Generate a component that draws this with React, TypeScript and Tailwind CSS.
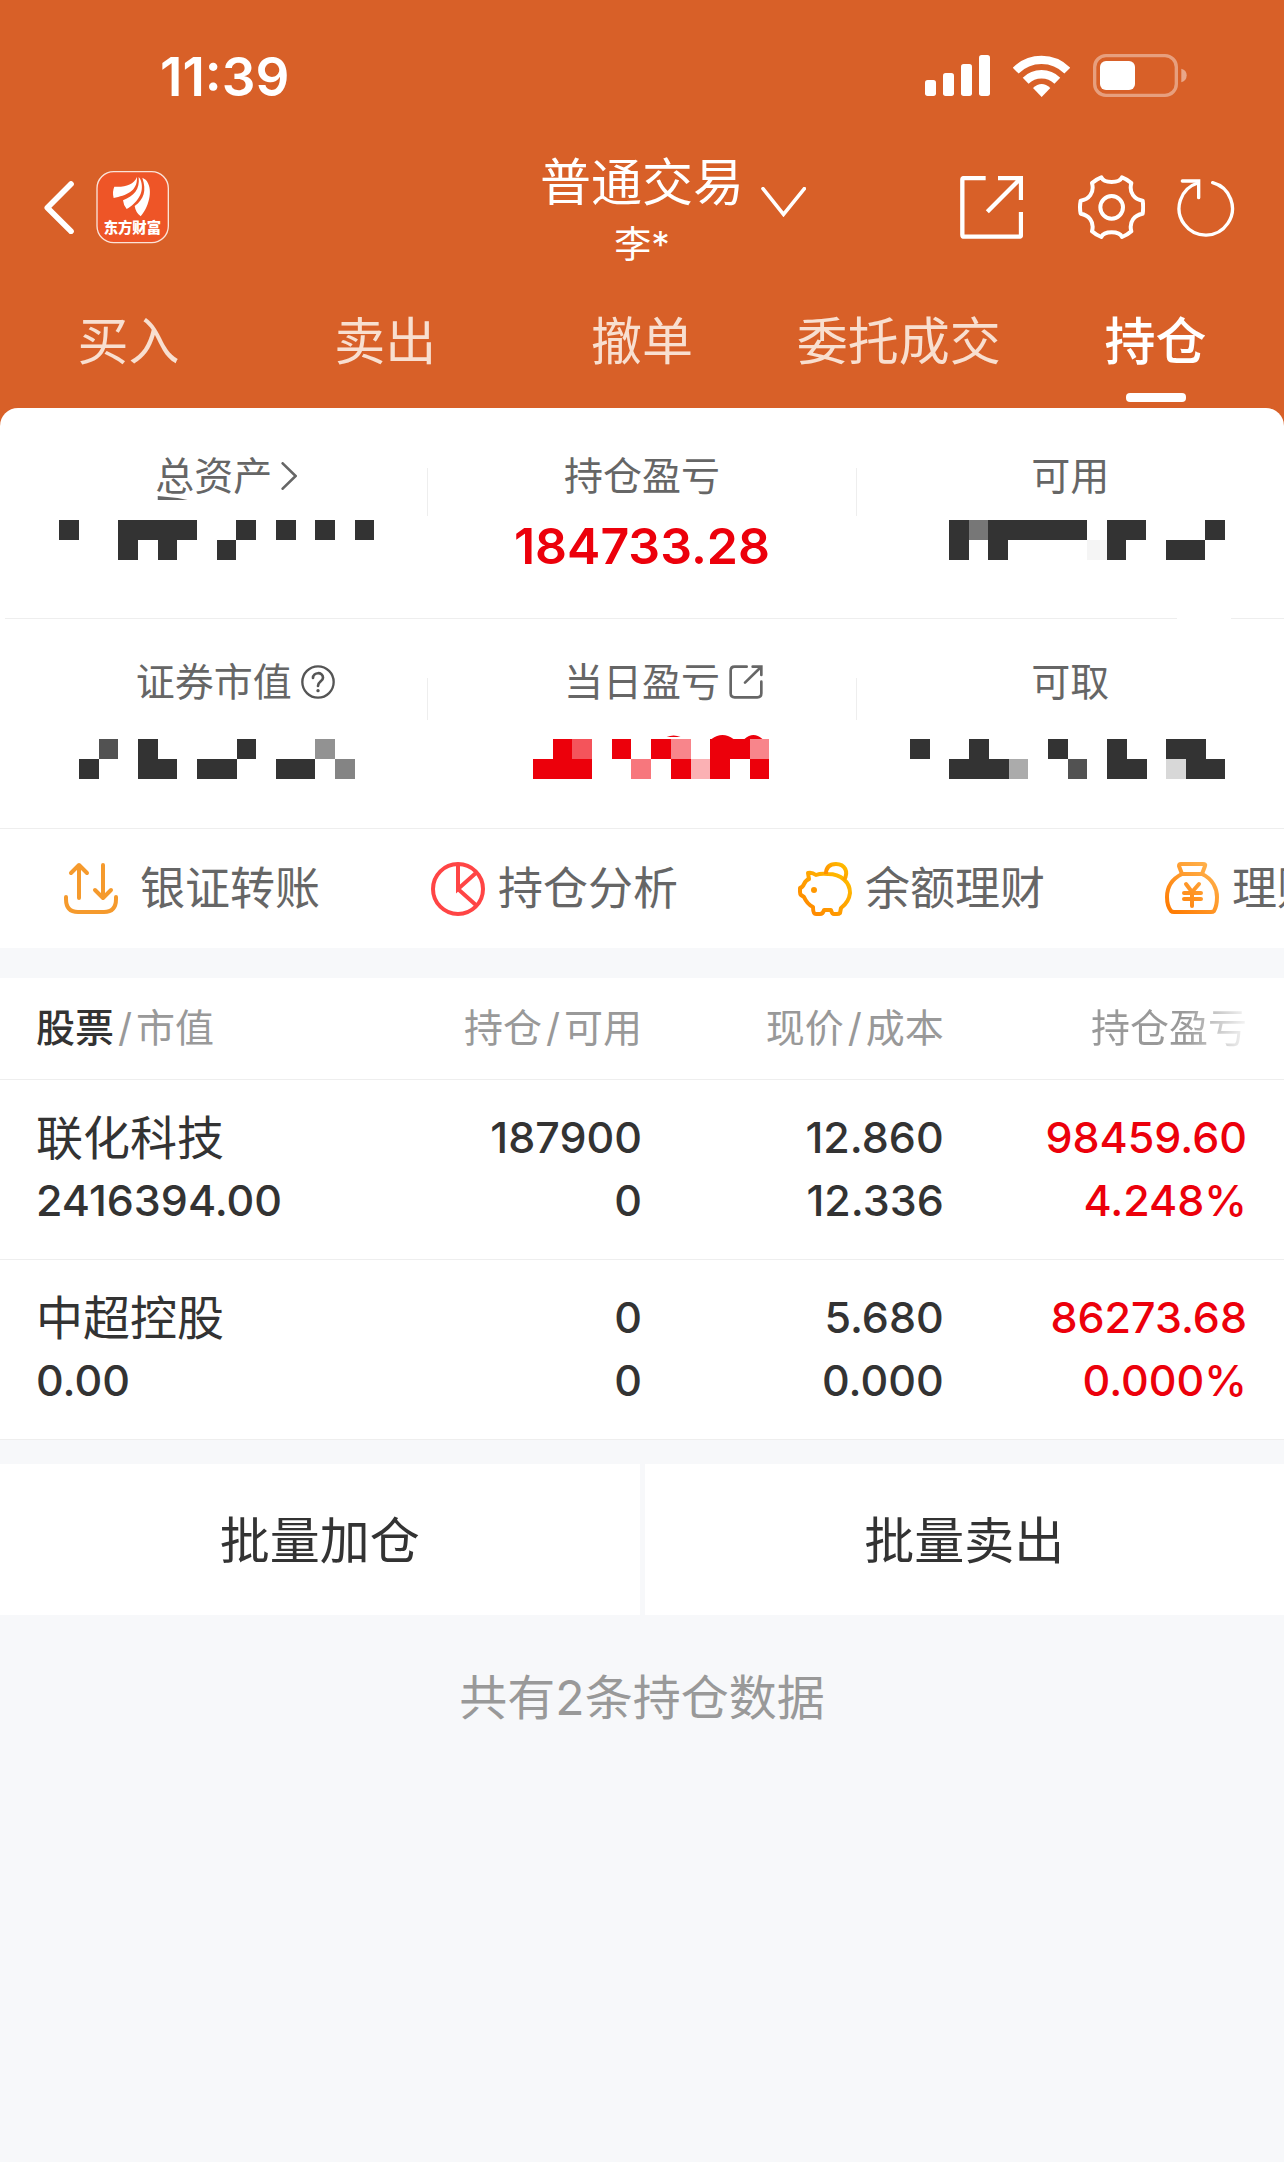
import { useState } from 'react';
import type { ReactNode } from 'react';

const TABS = ['买入', '卖出', '撤单', '委托成交', '持仓'];

const HOLDINGS = [
  { name: '联化科技', value: '2416394.00', amount: '187900', usable: '0', price: '12.860', cost: '12.336', profit: '98459.60', rate: '4.248%' },
  { name: '中超控股', value: '0.00', amount: '0', usable: '0', price: '5.680', cost: '0.000', profit: '86273.68', rate: '0.000%' },
];

// Masked amounts: '#' is a solid block, a letter is one of the lighter tones.
const MASKS = {
  total: { left: 59, rows: ['#..####..#.#.#.#', '...#.#..#.......'], tones: { '#': '#333333' } },
  market: { left: 79, rows: ['.a.#....#...c.', '#..##.##..##.b'], tones: { '#': '#333333', a: '#525252', b: '#848484', c: '#929292' } },
  today: { left: 105, rows: ['.#a.#.#c.##c', '###..b.#d#.#'], tones: { '#': '#ec000b', a: '#f4545b', b: '#f7777d', c: '#f8858b', d: '#fbb1b4' } },
  usable: { left: 92, rows: ['#a#####.##...#', '#.#....b#..##.'], tones: { '#': '#333333', a: '#777777', b: '#f5f5f5' } },
  cash: { left: 53, rows: ['#..#...#..#..##.', '..###a..b.##.c##'], tones: { '#': '#333333', a: '#ababab', b: '#525252', c: '#d8d8d8' } },
};

const CELL = 19.75;

function Mask({ kind, children }: { kind: keyof typeof MASKS; children?: ReactNode }) {
  const { left, rows } = MASKS[kind];
  const tones: Record<string, string> = MASKS[kind].tones;
  return (
    <svg viewBox="0 0 428 40" className="w-full overflow-visible" role="img" aria-label="已隐藏">
      <g shapeRendering="crispEdges">
        {rows.map((row, y) =>
          [...row].map((c, x) =>
            c === '.' ? null : <rect key={`${x}-${y}`} x={left + x * CELL} y={y * 20} width={CELL} height={20} fill={tones[c]} />
          )
        )}
      </g>
      {children}
    </svg>
  );
}

function Stat({ label, icon, className, children }: { label: string; icon?: ReactNode; className: string; children: ReactNode }) {
  return (
    <div className={`flex-1 flex flex-col ${className}`}>
      <div className="grid grid-cols-[1fr_auto_1fr] items-center text-[39px] leading-[50px] text-[#666]">
        <span className="col-start-2">{label}</span>
        {icon}
      </div>
      {children}
    </div>
  );
}

function StatusBar() {
  return (
    <div className="h-[150px] pt-1 pl-[160px] pr-[97px] flex items-center justify-between">
      <span className="text-[53px] leading-none font-semibold">11:39</span>
      <div className="flex items-center mb-[3px]">
        <svg viewBox="75 75 195 123" className="w-[65px] h-[41px] mr-[23px]" fill="#fff">
          <rect x="75" y="150" width="33" height="48" rx="8" />
          <rect x="129" y="129" width="33" height="69" rx="8" />
          <rect x="183" y="102" width="33" height="96" rx="8" />
          <rect x="237" y="75" width="33" height="123" rx="8" />
        </svg>
        <svg viewBox="339 72 171 126" className="w-[57px] h-[42px] mr-[23px]" fill="none" stroke="#fff" strokeWidth="25">
          <path d="M347 119 A109 109 0 0 1 502 119" />
          <path d="M377 149 A68 68 0 0 1 472 149" />
          <path d="M425 198 L399 171 Q425 147 451 171 Z" fill="#fff" stroke="none" />
        </svg>
        <svg viewBox="579 72 282 129" className="w-[94px] h-[43px]" fill="#fff">
          <rect x="584" y="77" width="245" height="119" rx="34" fill="none" stroke="#fff" strokeOpacity=".4" strokeWidth="10" />
          <rect x="600" y="93" width="105" height="87" rx="18" />
          <path d="M844 116 Q860 120 860 136 Q860 152 844 157 Z" fillOpacity=".45" />
        </svg>
      </div>
    </div>
  );
}

function NavBar() {
  return (
    <div className="h-[114px] grid grid-cols-[1fr_auto_1fr] items-center">
      <div className="flex items-center pl-11">
        <button aria-label="返回">
          <svg viewBox="132 449 90 159" className="w-[30px] h-[53px]" fill="none" stroke="#fff" strokeWidth="17" strokeLinecap="round" strokeLinejoin="round">
            <path d="M213 458 L142 529 L213 600" />
          </svg>
        </button>
        <svg viewBox="288 420 219 219" className="w-[73px] h-[73px] ml-[22px]">
          <rect x="291" y="422" width="214" height="213" rx="50" fill="#ee5527" stroke="#fbe3d8" strokeWidth="4" />
          <g fill="#fff">
            <path d="M411 438 C401 462 375 469 343 467 Q336 482 341 501 C378 493 413 482 411 438 Z" />
            <path d="M416 438 C420 476 402 494 369 508 Q370 522 380 534 C409 517 434 488 423 450 Q421 443 416 438 Z" />
            <path d="M427 440 C440 480 432 504 404 525 Q407 545 422 556 C450 523 460 470 437 446 Z" />
            <text x="311" y="607" fontSize="43" fontWeight="900" fontFamily="'Noto Sans CJK SC', sans-serif">东方财富</text>
          </g>
        </svg>
      </div>
      <button className="grid grid-cols-[64px_auto_64px] items-center">
        <span className="col-start-2 flex flex-col gap-3 pt-[3px]">
          <span className="text-[51px] leading-[60px]">普通交易</span>
          <span className="text-[37px] leading-[40px]">李*</span>
        </span>
        <svg viewBox="782 167 136 92" className="w-[45px] h-[30px] ml-[17px] mb-3" fill="none" stroke="#fff" strokeWidth="11" strokeLinecap="round">
          <path d="M787 172 L850 251 L914 172" />
        </svg>
      </button>
      <div className="flex items-center justify-end pr-[49px]">
        <button aria-label="分享" className="mr-[55px]">
          <svg viewBox="180 441 189 189" className="w-[63px] h-[63px]" fill="none" stroke="#fff" strokeWidth="13">
            <path d="M257 447 H193 Q187 447 187 453 V617 Q187 623 193 623 H357 Q363 623 363 617 V549" />
            <path d="M294 447 H363 V513 M363 447 L262 548" />
          </svg>
        </button>
        <button aria-label="设置" className="mr-8">
          <svg viewBox="534 431 201 201" className="w-[67px] h-[67px]" fill="none" stroke="#fff" strokeWidth="12" strokeLinejoin="round">
            <path d="M604 441 C612 460 658 460 666 441 Q682 447 694 458 C686 488 704 508 728 511 Q731 531 728 550 C704 554 686 574 694 603 Q682 614 666 620 C658 601 612 601 604 620 Q588 614 576 603 C584 574 566 554 542 550 Q538 531 542 511 C566 508 584 488 576 458 Q588 447 604 441 Z" />
            <circle cx="635" cy="531" r="34" />
          </svg>
        </button>
        <button aria-label="刷新">
          <svg viewBox="831 444 174 174" className="w-[58px] h-[58px]" fill="none" stroke="#fff" strokeWidth="10" strokeLinecap="round">
            <path d="M938 455 A80 80 0 1 1 893 456" />
            <path d="M847 450 H896 V500" />
          </svg>
        </button>
      </div>
    </div>
  );
}

function TransferIcon() {
  return (
    <svg viewBox="0 0 54 54" className="w-[54px] h-[54px] mr-[9px]" fill="none" stroke="#f59a2d" strokeWidth="4" strokeLinecap="round" strokeLinejoin="round">
      <path d="M15 36 V4 M7 11 L15 3 L23 11" />
      <path d="M39 3 V34 M31 28 L39 36 L47 28" />
      <path d="M2 35 V37 Q2 50 14 50 H40 Q52 50 52 37 V35" />
    </svg>
  );
}

function PieIcon() {
  return (
    <svg viewBox="0 0 54 54" className="w-[54px] h-[54px]" fill="none" stroke="#ff4545" strokeWidth="4">
      <circle cx="27" cy="27" r="25" />
      <path d="M27 2 V27 L46 10 M27 27 L46 44" />
    </svg>
  );
}

function PiggyIcon() {
  return (
    <svg viewBox="0 0 54 54" className="w-[54px] h-[54px]" fill="none" stroke="url(#piggy)" strokeWidth="4" strokeLinejoin="round">
      <defs>
        <linearGradient id="piggy" x1="0" y1="1" x2="1" y2="0">
          <stop offset="0" stopColor="#ff8200" />
          <stop offset="1" stopColor="#ffc000" />
        </linearGradient>
      </defs>
      <path d="M10 11 Q14 10 18 13 Q23 11 30 12 C43 12 52 20 52 31 Q51 40 43 46 L42 51 Q41 52 39 52 H36 Q34 52 33 48 H26 Q25 52 22 52 H18 Q15 52 15 45 Q9 42 6 35 L3 33 Q2 32 2 30 V26 Q5 25 6 22 Q8 18 11 17 Z" />
      <path d="M28 12 C28 4 33 2 38 2 C47 2 51 10 46 18" />
      <circle cx="16" cy="28" r="3" fill="#ff9800" stroke="none" />
    </svg>
  );
}

function MoneyBagIcon() {
  return (
    <svg viewBox="0 0 54 54" className="w-[54px] h-[54px]" fill="none" stroke="url(#bag)" strokeWidth="4" strokeLinejoin="round" strokeLinecap="round">
      <defs>
        <linearGradient id="bag" gradientUnits="userSpaceOnUse" x1="6" y1="52" x2="46" y2="6">
          <stop offset="0" stopColor="#ff7a00" />
          <stop offset="1" stopColor="#ffb04a" />
        </linearGradient>
      </defs>
      <path d="M17 12 L14 4 Q14 2 16 2 H38 Q41 2 40 4 L37 12 Z" />
      <path d="M17 12 C5 18 2 27 2 35 Q2 44 6 49 Q7 50 9 50 H46 Q48 50 49 49 Q52 44 52 35 C52 27 48 17 37 12" />
      <path d="M21 22 L27 30 L34 22 M19 31 H36 M19 37 H36 M27 30 V44" />
    </svg>
  );
}

const SHORTCUTS = [
  { label: '银证转账', Icon: TransferIcon },
  { label: '持仓分析', Icon: PieIcon },
  { label: '余额理财', Icon: PiggyIcon },
  { label: '理财', Icon: MoneyBagIcon },
];

export default function App() {
  const [tab, setTab] = useState('持仓');

  return (
    <div className="min-h-screen overflow-x-hidden bg-[#f7f8fa] text-[#333] font-['Inter','Noto_Sans_CJK_SC',sans-serif]">
      <header className="bg-[#d86028] text-white">
        <StatusBar />
        <NavBar />
        <nav className="grid grid-cols-5">
          {TABS.map((t) => (
            <button
              key={t}
              onClick={() => setTab(t)}
              className={`flex flex-col items-center pt-12 pb-[6px] text-[51px] leading-[60px] whitespace-nowrap ${t === tab ? 'font-medium' : 'text-[#f8dfd0]'}`}
            >
              {t}
              <span className={`mt-[21px] h-[9px] w-[60px] rounded ${t === tab ? 'bg-white' : ''}`} />
            </button>
          ))}
        </nav>
      </header>

      <section className="bg-[#d86028]">
        <div className="bg-white rounded-t-[18px]">
          <div className="flex h-[210px]">
            <Stat
              label="总资产"
              className="pt-[43px] gap-[19px]"
              icon={
                <svg viewBox="841 70 48 84" className="w-4 h-7 ml-[9px]" fill="none" stroke="#666" strokeWidth="8" strokeLinecap="round">
                  <path d="M846 74 L885 112 L846 150" />
                </svg>
              }
            >
              <Mask kind="total">
                <path d="M158 -24 L178 -22 L188 -20 H158 Z" fill="#666" />
              </Mask>
            </Stat>
            <span className="mt-[60px] h-12 w-px bg-[#eee]" />
            <Stat label="持仓盈亏" className="pt-[43px] gap-[19px]">
              <span className="text-center text-[50px] leading-[52px] font-semibold text-[#ec000b]">184733.28</span>
            </Stat>
            <span className="mt-[60px] h-12 w-px bg-[#eee]" />
            <Stat label="可用" className="pt-[43px] gap-[19px]">
              <Mask kind="usable" />
            </Stat>
          </div>

          <div className="flex h-px gap-[54px] pl-[5px]">
            <span className="flex-1 bg-[#eee]" />
            <span className="w-[53px] bg-[#eee]" />
          </div>

          <div className="flex h-[210px] border-b border-[#eee]">
            <Stat
              label="证券市值"
              className="pt-[38px] gap-8"
              icon={
                <svg viewBox="883 673 102 102" className="w-[34px] h-[34px] ml-[9px]" fill="none" stroke="#555" strokeWidth="7" strokeLinecap="round">
                  <circle cx="934" cy="724" r="47" />
                  <path d="M919 712 C919 693 949 693 949 711 C949 722 934 722 934 736" strokeWidth="8" />
                  <circle cx="934" cy="750" r="5" fill="#555" stroke="none" />
                </svg>
              }
            >
              <Mask kind="market" />
            </Stat>
            <span className="mt-[59px] h-[42px] w-px bg-[#eee]" />
            <Stat
              label="当日盈亏"
              className="pt-[38px] gap-8"
              icon={
                <svg viewBox="900 672 102 102" className="w-[34px] h-[34px] ml-[9px]" fill="none" stroke="#666" strokeWidth="8" strokeLinecap="round">
                  <path d="M953 677 H917 Q905 677 905 689 V757 Q905 769 917 769 H985 Q997 769 997 757 V722" />
                  <path d="M971 677 H997 V702 M996 678 L948 725" />
                </svg>
              }
            >
              <Mask kind="today">
                <path d="M239 -2 Q246 -5 253 -2 Z M284 0 Q295 -8 306 0 Z M317 0 Q326 -8 335 0 Z" fill="#ec000b" />
              </Mask>
            </Stat>
            <span className="mt-[59px] h-[42px] w-px bg-[#eee]" />
            <Stat label="可取" className="pt-[38px] gap-8">
              <Mask kind="cash" />
            </Stat>
          </div>

          <div className="flex h-[119px] items-center overflow-hidden pl-[64px]">
            {SHORTCUTS.map(({ label, Icon }) => (
              <button key={label} className="flex w-[367px] shrink-0 items-center gap-[13px] text-[45px] leading-[60px] text-[#666]">
                <Icon />
                {label}
              </button>
            ))}
          </div>
        </div>
      </section>

      <table className="mt-[30px] w-full table-fixed border-collapse bg-white">
        <thead>
          <tr className="h-[101px] border-b border-[#eee] text-[39px] text-right text-[#999]">
            <th className="w-[26%] pl-9 text-left font-normal whitespace-nowrap">
              <span className="font-medium text-[#333]">股票</span>
              <span className="mx-1">/</span>市值
            </th>
            <th className="w-[24%] font-normal">持仓<span className="mx-1">/</span>可用</th>
            <th className="w-[23.5%] font-normal">现价<span className="mx-1">/</span>成本</th>
            <th className="pr-[37px] font-normal">
              <span className="bg-linear-to-r from-[#999] from-60% to-[#f6f6f6] bg-clip-text text-transparent">持仓盈亏</span>
            </th>
          </tr>
        </thead>
        <tbody>
          {HOLDINGS.map((h) => (
            <tr key={h.name} className="h-[180px] border-b border-[#eee] text-right text-[43px] leading-[63px] font-medium">
              <td className="pl-9 text-left">
                <div className="text-[47px] font-normal">{h.name}</div>
                <div>{h.value}</div>
              </td>
              <td>
                <div>{h.amount}</div>
                <div>{h.usable}</div>
              </td>
              <td>
                <div>{h.price}</div>
                <div>{h.cost}</div>
              </td>
              <td className="pr-[37px] text-[#ec000b]">
                <div>{h.profit}</div>
                <div>{h.rate}</div>
              </td>
            </tr>
          ))}
        </tbody>
      </table>

      <div className="mt-6 grid grid-cols-2 gap-[5px]">
        <button className="h-[151px] bg-white pt-1 text-[50px]">批量加仓</button>
        <button className="h-[151px] bg-white pt-1 text-[50px]">批量卖出</button>
      </div>

      <p className="mt-[53px] text-center text-[48px] leading-[60px] text-[#999]">共有2条持仓数据</p>
    </div>
  );
}
